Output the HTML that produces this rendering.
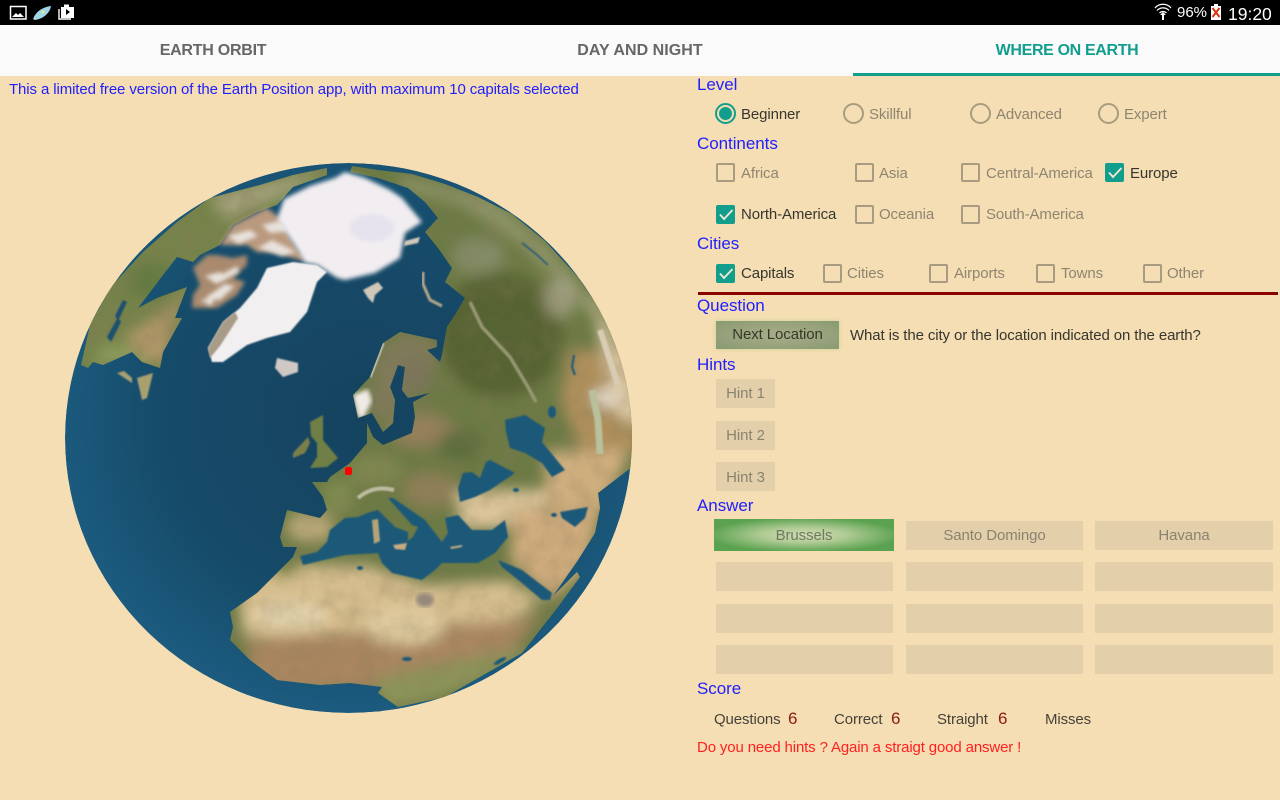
<!DOCTYPE html>
<html lang="en"><head><meta charset="utf-8"><title>Earth Position</title>
<style>
html,body{margin:0;padding:0;width:1280px;height:800px;overflow:hidden;background:#f5deb3;font-family:"Liberation Sans",sans-serif}
#status{position:absolute;left:0;top:0;width:1280px;height:25px;background:#000}
#tabs{position:absolute;left:0;top:25px;width:1280px;height:51px;background:#fafafa}
#ul{position:absolute;left:853px;top:73px;width:427px;height:3px;background:#129e8d}
.tab{position:absolute;top:26px;height:50px;line-height:50px;text-align:center;font-weight:bold;font-size:16px;color:#666;width:426px;letter-spacing:-.25px}
.a{position:absolute;white-space:nowrap;line-height:20px;font-size:15px;letter-spacing:-.11px;margin-top:1px}
.h{color:#2020ff;font-size:17px;letter-spacing:-.05px;margin-top:0}
.on{color:#36362f}.off{color:#8e8571}
.r{position:absolute;width:17px;height:17px;border:2px solid #a99b80;border-radius:50%;top:103px}
.c{position:absolute;width:15px;height:15px;border:2px solid #a99b80;border-radius:2px}
.k{position:absolute;width:19px;height:19px;background:#129e8d;border-radius:2px}
.k svg{position:absolute;left:0;top:0}
.b{position:absolute;background:#e3d0ab;color:#8a8270;text-align:center;font-size:15px;letter-spacing:-.09px}
.n{position:absolute;color:#8b1a10;font-size:17px;line-height:20px}
svg{display:block}
</style></head><body>
<div id="status"></div>
<svg style="position:absolute;left:0;top:0" width="1280" height="25" viewBox="0 0 1280 25">
<rect x="10.500" y="6.500" width="15.500" height="12.500" fill="none" stroke="#fff" stroke-width="1.500"/>
<path d="M12 17l4-4 2 2 2-2 4 4z" fill="#fff"/>
<path d="M33 19c3-8 10-12 18-13-1 7-8 13-16 14z" fill="#9fd6e6"/><circle cx="43" cy="12" r="1.500" fill="#e8e49a"/>
<path d="M59 9v10h12" fill="none" stroke="#fff" stroke-width="1.400"/>
<path d="M61 7h3V4.500h5V7h5v11H61z" fill="#fff"/><path d="M66 9l4 3-4 3z" fill="#000"/>
<g fill="none" stroke="#fff" stroke-width="1.200"><path d="M1155 8c4-5 12-5 16 0"/><path d="M1157 10.500c3-3.500 9-3.500 12 0"/><path d="M1159.500 13c2-2 5-2 7 0"/></g>
<path d="M1163 12l3 3h-2v5h-2v-5h-2z" fill="#fff"/>
<rect x="1214" y="4" width="4" height="2" fill="#fff"/><rect x="1211" y="6" width="10" height="14" fill="#fff"/>
<path d="M1212.500 8l7 9M1219.500 8l-7 9" stroke="#e03010" stroke-width="2"/>
</svg>
<div class="a" style="left:1177px;top:2px;color:#fff;font-size:15px;letter-spacing:0">96%</div>
<div class="a" style="left:1228px;top:3px;color:#fff;font-size:17.500px;letter-spacing:0">19:20</div>
<div id="tabs"></div><div id="ul"></div>
<div class="tab" style="left:0">EARTH ORBIT</div>
<div class="tab" style="left:427px;letter-spacing:.05px">DAY AND NIGHT</div>
<div class="tab" style="left:854px;color:#119e8f;letter-spacing:-.35px">WHERE ON EARTH</div>

<div class="a" style="left:9px;top:79px;color:#2020ff">This a limited free version of the Earth Position app, with maximum 10 capitals selected</div>

<svg style="position:absolute;left:0;top:0" width="690" height="800" viewBox="0 0 690 800">
<defs>
<clipPath id="g"><ellipse cx="348.500" cy="438" rx="283.500" ry="275"/></clipPath>
<clipPath id="l"><path d="M312 482L327 482 330 477 350 463 367 443 367 423 373 437 383 445 412 433 415 417 413 402 430 393 408 398 402 390 405 367 398 365 390 387 395 400 393 423 383 432 372 413 358 418 353 395 370 377 383 343 400 332 437 340 437 347 427 350 440 362 442 355 447 327 455 315 465 298 445 282 452 268 438 248 425 232 438 218 425 202 408 188 378 178 350 172 352 166 378 170 412 174 445 184 478 197 512 214 545 241 578 277 605 317 625 367 645 420 650 460 628 470 598 493 600 508 595 533 578 560 553 596 577 572 580 577 558 607 522 653 492 670 445 697 398 707 378 693 382 687 350 683 320 685 277 680 250 660 230 640 233 627 230 612 257 593 273 577 293 557 297 547 283 547 280 537 287 510 320 518 327 510 323 497z"/></clipPath>
<clipPath id="na"><path d="M327 168L293 175 260 185 210 198 177 222 143 252 110 288 90 325 81 365 88 368 93 362 103 365 132 352 142 362 160 368 163 352 182 318 175 318 187 287 157 298 138 308 163 275 177 257 193 262 200 255 220 245 233 225 257 212 277 205 293 187 327 175z"/></clipPath>
<radialGradient id="oc" cx=".52" cy=".46" r=".55"><stop offset="0" stop-color="#15435f"/><stop offset=".65" stop-color="#164b6a"/><stop offset="1" stop-color="#1c5c80"/></radialGradient>
<filter id="b1" x="-5%" y="-5%" width="110%" height="110%"><feGaussianBlur stdDeviation=".9"/></filter>
<filter id="b2" x="-5%" y="-5%" width="110%" height="110%"><feGaussianBlur stdDeviation="2"/></filter>
<filter id="b7" x="-10%" y="-10%" width="120%" height="120%"><feGaussianBlur stdDeviation="7"/></filter>
<filter id="nz" x="0" y="0" width="100%" height="100%"><feTurbulence type="fractalNoise" baseFrequency=".05" numOctaves="3" seed="4"/><feColorMatrix values="0 0 0 0 .25 0 0 0 0 .2 0 0 0 0 .1 1.600 0 0 0 -.62"/></filter>
</defs>
<g clip-path="url(#g)">
<ellipse cx="348.500" cy="438" rx="283.500" ry="275" fill="url(#oc)"/>
<!-- North America -->
<g clip-path="url(#na)">
<rect x="60" y="150" width="280" height="240" fill="#75834a"/>
<g filter="url(#b7)">
<path d="M165 312L187 288 175 320 165 365 142 360 125 335z" fill="#b09668"/>
<path d="M210 195l115-25-30 20-70 30z" fill="#a4a27a"/>
<path d="M100 345l30 0 25 20-60 5z" fill="#8a9a5a"/>
<ellipse cx="150" cy="280" rx="25" ry="18" fill="#647a42"/>
</g>
<rect x="60" y="150" width="280" height="240" filter="url(#nz)" opacity=".5"/>
</g>
<g filter="url(#b1)">
<path d="M117 373l15 10 0-5-8-7zM137 378l16-5-6 25-5 2z" fill="#a9a070"/>
<path d="M123 300l-8 16 2 3-10 18 4 5 10-20-2-3 8-17zM210 262l-8 12 4 2 8-10z" fill="#1b4f70"/>
</g>
<g filter="url(#b2)">
<path d="M192 308L193 295 200 285 193 268 207 255 217 255 233 258 247 255 247 265 233 278 245 282 237 295 217 308 200 308z" fill="#a98a6e"/>
<path d="M233 225L267 208 280 218 293 242 307 262 273 252 257 252 247 245 220 245z" fill="#ba9a7e"/>
</g>
<g filter="url(#b2)" fill="#e8e2dc">
<path d="M205 276l15-4 8 6-12 6zM205 298l20-14 10 2-15 14zM200 300l15-2-4 8zM228 236l22-6 8 6-20 8zM262 225l18-4 8 10-18 2zM258 248l14-8 24 12-14 4zM215 278l22-12 2 6-18 10z"/>
</g>
<!-- Afro-Eurasia -->
<g clip-path="url(#l)">
<rect x="200" y="150" width="480" height="570" fill="#6c7a45"/>
<g filter="url(#b7)">
<ellipse cx="500" cy="335" rx="62" ry="62" fill="#566430"/>
<ellipse cx="478" cy="256" rx="26" ry="18" fill="#8a9070" opacity=".8"/>
<path d="M400 176l90 22 60 50 50 60-10 6-70-70-60-40-60-15z" fill="#8f9468"/>
<ellipse cx="560" cy="298" rx="16" ry="20" fill="#a7a488" opacity=".8"/>
<path d="M570 350h70v100h-60l-20-50z" fill="#ae8f5c"/>
<path d="M592 292l30 60 25 70-25 0-20-70z" fill="#dbc8a4"/>
<ellipse cx="606" cy="398" rx="13" ry="10" fill="#e6dccb"/>
<path d="M383 343l20-10 35 8-8 50-25 5-15 25-25-10z" fill="#7f7a5a"/>
<ellipse cx="415" cy="375" rx="16" ry="20" fill="#7b745a"/>
<ellipse cx="420" cy="430" rx="32" ry="18" fill="#94805a"/>
<ellipse cx="375" cy="470" rx="28" ry="16" fill="#7f8650"/>
<ellipse cx="460" cy="445" rx="22" ry="15" fill="#5e6d3c"/>
<ellipse cx="430" cy="490" rx="28" ry="18" fill="#8f7f56"/>
<ellipse cx="338" cy="497" rx="16" ry="18" fill="#7f8a50"/>
<ellipse cx="310" cy="527" rx="24" ry="16" fill="#baa878"/>
<path d="M455 490h95l-10 35-80 5z" fill="#dcc49a"/>
<path d="M545 450h85l-25 60-60-2z" fill="#cfae7e"/>
<path d="M515 510h85l-15 60-35 30-40-40z" fill="#cfab7d"/>
<path d="M237 565h130l60 20 80-5 35 20-60 40-110 5-130-10z" fill="#d6bd8d"/>
<path d="M245 640l130-10 140-10 30-10-40 50-80 25-170 10z" fill="#a98660"/>
<path d="M378 677l117-25 40-5-50 35-75 25-30 0z" fill="#8c9358"/>
<ellipse cx="285" cy="570" rx="12" ry="8" fill="#7a8748"/>
<ellipse cx="405" cy="625" rx="40" ry="20" fill="#dec99e"/>
<ellipse cx="290" cy="615" rx="38" ry="14" fill="#e2d2ac"/>
<ellipse cx="572" cy="645" rx="30" ry="14" fill="#9a9966"/>
</g>
<rect x="200" y="150" width="480" height="570" filter="url(#nz)" opacity=".32"/>
<g filter="url(#b1)" fill="none">
<path d="M470 302l12 25 28 30 18 30 8 15" stroke="#969773" stroke-width="3.500"/>
<path d="M358 498c8-7 20-12 36-8" stroke="#bdbb9f" stroke-width="4"/>
<path d="M600 330l18 55" stroke="#d8cdb4" stroke-width="6"/>
<path d="M592 390l6 30 2 34" stroke="#b8c09c" stroke-width="7"/>
<path d="M383 343l-13 34" stroke="#cfc8b6" stroke-width="3"/>
</g>
<path d="M353 395l15-6 4 12-8 16-6 1z" fill="#efeae4" filter="url(#b2)"/>
<ellipse cx="425" cy="600" rx="9" ry="7" fill="#95887a" filter="url(#b2)"/>
</g>
<!-- seas -->
<g filter="url(#b1)" fill="#1a5878">
<path d="M300 556L317 552 327 542 330 530 345 518 358 517 370 512 378 510 395 527 408 532 408 540 402 545 413 537 418 527 412 525 388 498 393 498 425 520 442 542 448 533 445 518 458 515 472 530 492 530 505 520 508 537 495 553 478 563 442 563 435 570 422 580 392 573 382 563 378 553 345 555 303 565z"/>
<path d="M460 502L458 488 463 473 472 472 480 478 486 462 490 460 515 473 490 490 475 497z"/>
<path d="M505 420l20-5 20 13-3 14 23 28-13 7-10-14-17-10-15-5-4-16z"/>
<path d="M560 512l28-5-3 11-10 9-13-9z"/>
<path d="M498 560l24 10 30 23-2 7-8 0-20-17-20-16z"/>
<ellipse cx="516" cy="490" rx="3" ry="2"/><ellipse cx="554" cy="515" rx="3" ry="2"/><ellipse cx="407" cy="659" rx="5" ry="2"/><ellipse cx="500" cy="661" rx="7" ry="2" transform="rotate(-30 500 661)"/><ellipse cx="360" cy="568" rx="3" ry="2"/><ellipse cx="552" cy="412" rx="4" ry="6"/>
<path d="M522 243l14 11 12 11" fill="none" stroke="#1a5878" stroke-width="1.500"/>
<path d="M574 355l-2 12 3 8" fill="none" stroke="#1a5878" stroke-width="2"/>
</g>
<!-- islands -->
<g filter="url(#b1)">
<path d="M293 453l15-16 2 6-5 10-12 5z" fill="#7a7f48"/>
<path d="M310 422l13-7 0 25 15 18-11 9-17 1 7-11 0-14-6-7z" fill="#6f7f45"/>
<path d="M372 520l6-1 2 22-6 3z" fill="#b5a478"/>
<path d="M393 545l14-2-2 7-10-1zM450 547l12-2 0 2-11 2z" fill="#c8ab80"/>
<path d="M277 358l21 5 0 9-15 5-8-9z" fill="#cfc8c4"/>
</g>
<path d="M345 172l20 6 25 12 12 8 20 24-17 11-5 25-25 15-30 7-8-2-20-13-12-2-8-14-20-30 7-20 26-13 25-8z" fill="#f1edf0" filter="url(#b2)"/>
<ellipse cx="372" cy="228" rx="22" ry="14" fill="#e6e2ee" filter="url(#b2)"/>
<path d="M267 268l26-6 24 3 10 7-10 10-10 30-17 20-23 6-20 7-24 17-11 0-4-14 15-26 17-14 17-20z" fill="#f2eff0" filter="url(#b1)"/>
<path d="M208 348l15-26 12-10 3 6-18 28-10 12z" fill="#a89c88" filter="url(#b1)"/>
<path d="M405 241l15-4-2 6-14 3zM363 290l15-8 5 6-8 7-2 8-5-5z" fill="#cfc8b8" filter="url(#b1)"/>
<path d="M423 272l0 12 7 16 12 6" fill="none" stroke="#b0a488" stroke-width="3" filter="url(#b1)"/>
</g>
<rect x="345" y="467" width="7" height="8" rx="2" fill="#f00"/>
</svg>

<div class="a h" style="left:697px;top:75px">Level</div>
<div class="r" style="left:715px;border-color:#129e8d"></div><div style="position:absolute;left:719px;top:107px;width:13px;height:13px;border-radius:50%;background:#129e8d"></div>
<div class="a on" style="left:741px;top:104px">Beginner</div>
<div class="r" style="left:843px"></div><div class="a off" style="left:869px;top:104px">Skillful</div>
<div class="r" style="left:970px"></div><div class="a off" style="left:996px;top:104px">Advanced</div>
<div class="r" style="left:1098px"></div><div class="a off" style="left:1124px;top:104px">Expert</div>

<div class="a h" style="left:697px;top:134px">Continents</div>
<div class="c" style="left:716px;top:163px"></div><div class="a off" style="left:741px;top:163px">Africa</div>
<div class="c" style="left:855px;top:163px"></div><div class="a off" style="left:879px;top:163px">Asia</div>
<div class="c" style="left:961px;top:163px"></div><div class="a off" style="left:986px;top:163px">Central-America</div>
<div class="k" style="left:1105px;top:163px"><svg width="19" height="19"><path d="M4 9.500l4 4.500 8.500-9" fill="none" stroke="#f5e8d0" stroke-width="1.800"/></svg></div><div class="a on" style="left:1130px;top:163px">Europe</div>
<div class="k" style="left:716px;top:205px"><svg width="19" height="19"><path d="M4 9.500l4 4.500 8.500-9" fill="none" stroke="#f5e8d0" stroke-width="1.800"/></svg></div><div class="a on" style="left:741px;top:204px">North-America</div>
<div class="c" style="left:855px;top:205px"></div><div class="a off" style="left:879px;top:204px">Oceania</div>
<div class="c" style="left:961px;top:205px"></div><div class="a off" style="left:986px;top:204px">South-America</div>

<div class="a h" style="left:697px;top:234px">Cities</div>
<div class="k" style="left:716px;top:264px"><svg width="19" height="19"><path d="M4 9.500l4 4.500 8.500-9" fill="none" stroke="#f5e8d0" stroke-width="1.800"/></svg></div><div class="a on" style="left:741px;top:263px">Capitals</div>
<div class="c" style="left:823px;top:264px"></div><div class="a off" style="left:847px;top:263px">Cities</div>
<div class="c" style="left:929px;top:264px"></div><div class="a off" style="left:954px;top:263px">Airports</div>
<div class="c" style="left:1036px;top:264px"></div><div class="a off" style="left:1061px;top:263px">Towns</div>
<div class="c" style="left:1143px;top:264px"></div><div class="a off" style="left:1167px;top:263px">Other</div>
<div style="position:absolute;left:698px;top:292px;width:580px;height:3px;background:#8b0000"></div>

<div class="a h" style="left:697px;top:296px">Question</div>
<div class="b" style="left:716px;top:321px;width:123px;height:28px;line-height:27px;color:#333a28;background:radial-gradient(ellipse at center,#a8ac88 0,#96a27c 60%,#879a72 100%);box-shadow:0 0 5px #cdd296">Next Location</div>
<div class="a on" style="left:850px;top:325px">What is the city or the location indicated on the earth?</div>

<div class="a h" style="left:697px;top:355px">Hints</div>
<div class="b" style="left:716px;top:379px;width:59px;height:29px;line-height:30px">Hint 1</div>
<div class="b" style="left:716px;top:421px;width:59px;height:29px;line-height:29px">Hint 2</div>
<div class="b" style="left:716px;top:462px;width:59px;height:29px;line-height:31px">Hint 3</div>

<div class="a h" style="left:697px;top:496px">Answer</div>
<div class="b" style="left:714px;top:519px;width:180px;height:32px;line-height:34px;color:#6f7a60;background:radial-gradient(ellipse 54% 54% at center,#cddab2 0,#b4cd98 40%,#5aa24f 100%)">Brussels</div>
<div class="b" style="left:906px;top:521px;width:177px;height:29px;line-height:30px">Santo Domingo</div>
<div class="b" style="left:1095px;top:521px;width:178px;height:29px;line-height:30px">Havana</div>
<div class="b" style="left:716px;top:562px;width:177px;height:29px"></div><div class="b" style="left:906px;top:562px;width:177px;height:29px"></div><div class="b" style="left:1095px;top:562px;width:178px;height:29px"></div>
<div class="b" style="left:716px;top:604px;width:177px;height:29px"></div><div class="b" style="left:906px;top:604px;width:177px;height:29px"></div><div class="b" style="left:1095px;top:604px;width:178px;height:29px"></div>
<div class="b" style="left:716px;top:645px;width:177px;height:29px"></div><div class="b" style="left:906px;top:645px;width:177px;height:29px"></div><div class="b" style="left:1095px;top:645px;width:178px;height:29px"></div>

<div class="a h" style="left:697px;top:679px">Score</div>
<div class="a on" style="left:714px;top:709px;color:#45423a">Questions</div><div class="n" style="left:788px;top:709px">6</div>
<div class="a on" style="left:834px;top:709px;color:#45423a">Correct</div><div class="n" style="left:891px;top:709px">6</div>
<div class="a on" style="left:937px;top:709px;color:#45423a">Straight</div><div class="n" style="left:998px;top:709px">6</div>
<div class="a on" style="left:1045px;top:709px;color:#45423a">Misses</div>
<div class="a" style="left:697px;top:737px;color:#ff2020;letter-spacing:-.14px">Do you need hints ? Again a straigt good answer !</div>
</body></html>
